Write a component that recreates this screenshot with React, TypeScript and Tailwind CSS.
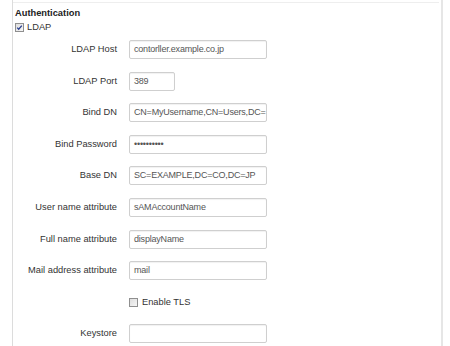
import React from 'react';

const FONT = { fontFamily: '"Liberation Sans", Arial, sans-serif' };

interface Field {
  label: string;
  value?: string;
  width?: string;
}

const FIELDS: Field[] = [
  { label: 'LDAP Host', value: 'contorller.example.co.jp' },
  { label: 'LDAP Port', value: '389', width: 'w-[46px]' },
  { label: 'Bind DN', value: 'CN=MyUsername,CN=Users,DC=' },
  { label: 'Bind Password', value: '••••••••••' },
  { label: 'Base DN', value: 'SC=EXAMPLE,DC=CO,DC=JP' },
  { label: 'User name attribute', value: 'sAMAccountName' },
  { label: 'Full name attribute', value: 'displayName' },
  { label: 'Mail address attribute', value: 'mail' },
];

const Checkbox = ({ checked }: { checked?: boolean }) => (
  <svg width="9" height="9" viewBox="0 0 9 9" className="shrink-0">
    <defs>
      <linearGradient id={checked ? 'cbOn' : 'cbOff'} x1="0" y1="0" x2="1" y2="1">
        <stop offset="0" stopColor="#dcdcdc" />
        <stop offset="1" stopColor="#f8f8f8" />
      </linearGradient>
    </defs>
    <rect x="0.5" y="0.5" width="8" height="8" fill={`url(#${checked ? 'cbOn' : 'cbOff'})`} stroke="#8f8f8f" />
    {checked && <path d="M2.2 4.6 L3.7 6.2 L6.8 2.6" fill="none" stroke="#2a3f8f" strokeWidth="1.3" />}
  </svg>
);

const Row = ({ label, children }: { label: string; children: React.ReactNode }) => (
  <div className="flex items-center h-[19px]">
    <div className="w-[102px] shrink-0 text-right text-[#333] whitespace-nowrap">{label}</div>
    <div className="ml-[12px] flex items-center">{children}</div>
  </div>
);

export default function App() {
  return (
    <div className="w-[450px] h-[346px] bg-white overflow-hidden text-[9.3px] leading-[11px]" style={FONT}>
      <div className="ml-[12px] w-[431px] h-[346px] border-l border-r-2 border-l-[#dcdcdc] border-r-[#e6e6e6] pt-[2px]">
        <div className="mr-[2px] border-t border-[#eeeeee]" />
        <div className="pl-[2px]">
          <h3 className="mt-[5px] font-bold text-[#222]">Authentication</h3>
          <label className="mt-[4px] flex items-center gap-[3px] h-[9px] text-[#333]">
            <Checkbox checked />
            <span>LDAP</span>
          </label>
          <div className="mt-[8px] flex flex-col gap-[12.6px]">
            {FIELDS.map((f) => (
              <Row key={f.label} label={f.label}>
                <div
                  className={`${f.width ?? 'w-[138px]'} h-[19px] border border-[#cfcfcf] rounded-[2px] shadow-[inset_0_1px_1px_rgba(0,0,0,0.06)] pl-[4px] pr-[1px] flex items-center overflow-hidden whitespace-nowrap text-[9px] tracking-[-0.2px] text-[#555]`}
                >
                  {f.value}
                </div>
              </Row>
            ))}
            <Row label="">
              <label className="flex items-center gap-[4px] text-[#333]">
                <Checkbox />
                <span>Enable TLS</span>
              </label>
            </Row>
            <Row label="Keystore">
              <div className="w-[138px] h-[19px] border border-[#cfcfcf] rounded-[2px] shadow-[inset_0_1px_1px_rgba(0,0,0,0.06)]" />
            </Row>
          </div>
        </div>
      </div>
    </div>
  );
}
